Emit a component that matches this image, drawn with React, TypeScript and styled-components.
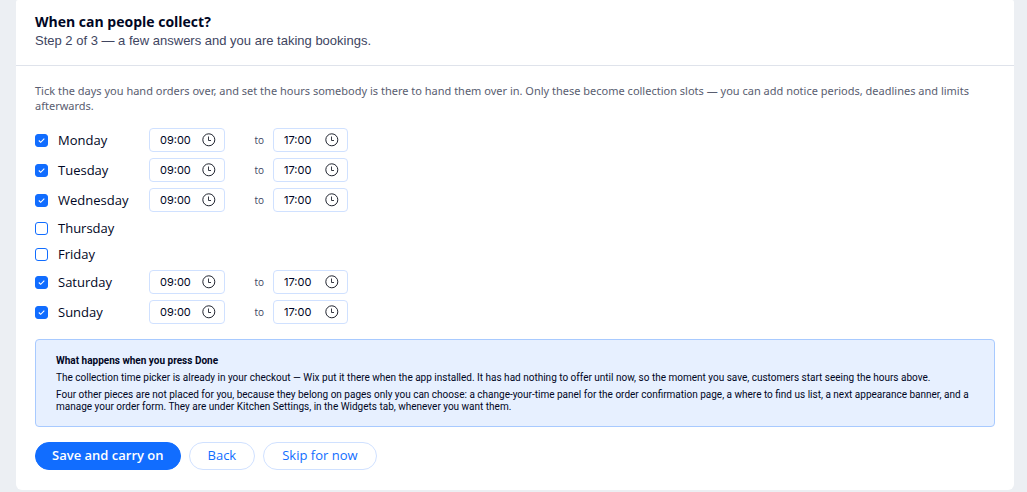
import React, { useState } from "react";
import styled, { createGlobalStyle } from "styled-components";

const wide = '"Open Sans", "Noto Sans", sans-serif';
const compact = 'Roboto, "Liberation Sans", sans-serif';

const GlobalStyle = createGlobalStyle`
  *, *::before, *::after { box-sizing: border-box; }
  body {
    margin: 0;
    background: #eceff3;
    color: #000624;
    font-family: ${wide};
    font-size: 13px;
  }
  h1, h2, p, ul { margin: 0; padding: 0; }
  button, input { font-family: inherit; }
`;

const Page = styled.main`
  padding: 0 13px 2px 16px;
`;

const Card = styled.section`
  background: #fff;
  border-radius: 2px 2px 6px 6px;
`;

const CardHeader = styled.header`
  padding: 12px 19px 15px;
  border-bottom: 1px solid #dfe3eb;
`;

const Title = styled.h1`
  font-size: 14px;
  line-height: 20px;
  font-weight: 700;
`;

const Subtitle = styled.p`
  font-family: "Liberation Sans", sans-serif;
  line-height: 18px;
  color: #40455f;
`;

const CardBody = styled.form`
  padding: 17px 19px 20px;
`;

const Intro = styled.p`
  font-family: "Noto Sans", sans-serif;
  font-size: 11px;
  line-height: 15px;
  color: #595d70;
`;

const DayList = styled.ul`
  display: flex;
  flex-direction: column;
  gap: 6px;
  margin: 15px 0;
  list-style: none;
`;

const DayRow = styled.li`
  display: grid;
  grid-template-columns: 114px 76px 48px 75px;
  align-items: center;
  min-height: 20px;
`;

const DayLabel = styled.label`
  display: flex;
  align-items: center;
  gap: 10px;
  line-height: 20px;
`;

const TickBox = styled.span`
  display: grid;
  flex: none;
  width: 13px;
  height: 13px;

  > * { grid-area: 1 / 1; }
`;

const Tick = styled.input`
  appearance: none;
  width: 13px;
  height: 13px;
  margin: 0;
  border: 1px solid #116dff;
  border-radius: 3px;
  background: #fff;

  &:checked { background: #116dff; }
`;

const TickMark = styled.svg`
  width: 13px;
  height: 13px;
  pointer-events: none;
`;

const TimeField = styled.span`
  display: flex;
  align-items: center;
  height: 24px;
  padding: 0 8px 0 10px;
  border: 1px solid #d0e1ff;
  border-radius: 4px;
  background: #fff;
`;

const TimeInput = styled.input`
  flex: 1;
  min-width: 0;
  padding: 0;
  border: 0;
  outline: 0;
  background: transparent;
  color: #000624;
  font-family: Inter, sans-serif;
  font-size: 11px;
  line-height: 16px;
`;

const ClockIcon = styled.svg`
  flex: none;
  width: 14px;
  height: 14px;
`;

const To = styled.span`
  padding-right: 9px;
  color: #40455f;
  font-size: 10px;
  line-height: 16px;
  text-align: right;
`;

const Notice = styled.section`
  display: flex;
  flex-direction: column;
  gap: 5px;
  padding: 15px 20px 13px;
  border: 1px solid #a8caff;
  border-radius: 4px;
  background: #e7f0ff;
  font-family: ${compact};
  font-size: 10px;
  line-height: 12px;
`;

const NoticeTitle = styled.h2`
  font-size: 10px;
  line-height: 12px;
  font-weight: 700;
`;

const Actions = styled.div`
  display: flex;
  flex-wrap: wrap;
  gap: 8px;
  margin-top: 15px;
`;

const Button = styled.button<{ $primary?: boolean }>`
  height: 28px;
  padding: ${(p) => (p.$primary ? "0 16px 2px" : "0 18px 2px")};
  border: 1px solid ${(p) => (p.$primary ? "#116dff" : "#d0e1ff")};
  border-radius: 14px;
  background: ${(p) => (p.$primary ? "#116dff" : "#fff")};
  color: ${(p) => (p.$primary ? "#fff" : "#116dff")};
  font-size: 13px;
  line-height: 20px;
  font-weight: ${(p) => (p.$primary ? 600 : 500)};
  white-space: nowrap;
  cursor: pointer;
`;

const initialDays = [
  { name: "Monday", open: true },
  { name: "Tuesday", open: true },
  { name: "Wednesday", open: true },
  { name: "Thursday", open: false },
  { name: "Friday", open: false },
  { name: "Saturday", open: true },
  { name: "Sunday", open: true },
];

function Time({ label, value }: { label: string; value: string }) {
  return (
    <TimeField>
      <TimeInput aria-label={label} defaultValue={value} />
      <ClockIcon viewBox="0 0 14 14" fill="none" stroke="#20242f" aria-hidden="true">
        <circle cx="6.8" cy="6.8" r="6" />
        <path d="M6.5 3.5V7.5H9" strokeWidth="0.9" />
      </ClockIcon>
    </TimeField>
  );
}

export default function App() {
  const [days, setDays] = useState(initialDays);
  const toggle = (name: string) =>
    setDays(days.map((d) => (d.name === name ? { ...d, open: !d.open } : d)));

  return (
    <>
      <GlobalStyle />
      <Page>
        <Card>
          <CardHeader>
            <Title>When can people collect?</Title>
            <Subtitle>Step 2 of 3 — a few answers and you are taking bookings.</Subtitle>
          </CardHeader>
          <CardBody onSubmit={(e) => e.preventDefault()}>
            <Intro>
              Tick the days you hand orders over, and set the hours somebody is there to hand them
              over in. Only these become collection slots — you can add notice periods, deadlines
              and limits afterwards.
            </Intro>
            <DayList>
              {days.map(({ name, open }) => (
                <DayRow key={name}>
                  <DayLabel>
                    <TickBox>
                      <Tick type="checkbox" checked={open} onChange={() => toggle(name)} />
                      {open && (
                        <TickMark viewBox="0 0 13 13" fill="none" stroke="#fff" aria-hidden="true">
                          <path d="M3.8 6.5L5.7 8.3L9.3 4.7" strokeWidth="1.1" />
                        </TickMark>
                      )}
                    </TickBox>
                    {name}
                  </DayLabel>
                  {open && (
                    <>
                      <Time label={`${name} from`} value="09:00" />
                      <To>to</To>
                      <Time label={`${name} until`} value="17:00" />
                    </>
                  )}
                </DayRow>
              ))}
            </DayList>
            <Notice>
              <NoticeTitle>What happens when you press Done</NoticeTitle>
              <p>
                The collection time picker is already in your checkout — Wix put it there when the
                app installed. It has had nothing to offer until now, so the moment you save,
                customers start seeing the hours above.
              </p>
              <p>
                Four other pieces are not placed for you, because they belong on pages only you can
                choose: a change-your-time panel for the order confirmation page, a where to find us
                list, a next appearance banner, and a manage your order form. They are under Kitchen
                Settings, in the Widgets tab, whenever you want them.
              </p>
            </Notice>
            <Actions>
              <Button type="submit" $primary>Save and carry on</Button>
              <Button type="button">Back</Button>
              <Button type="button">Skip for now</Button>
            </Actions>
          </CardBody>
        </Card>
      </Page>
    </>
  );
}
